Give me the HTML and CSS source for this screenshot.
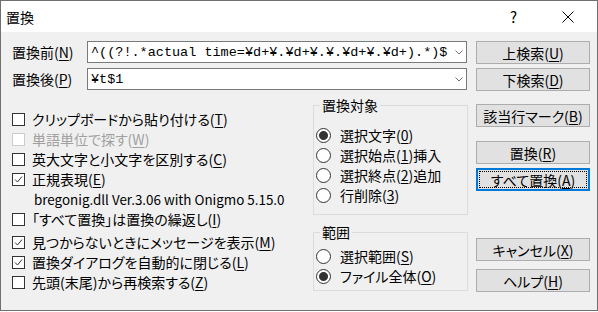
FILE: index.html
```html
<!DOCTYPE html>
<html lang="ja">
<head>
    <meta charset="UTF-8">
    <title>置換</title>
    <link rel="stylesheet" href="styles.css">
</head>
<body>

<div class="window">
    <div class="titlebar">
        <span class="title">置換</span>
        <span class="help">?</span>
        <svg class="close" width="12" height="12" viewBox="0 0 12 12"><path d="M0.5 0.5 L11.5 11.5 M11.5 0.5 L0.5 11.5" stroke="#000" stroke-width="1"/></svg>
    </div>

    <div class="content">
        <div class="main">
            <div class="field-row">
                <span class="field-label">置換前(<u>N</u>)</span>
                <div class="combo">
                    <span class="combo-text">^((?!.*actual time=¥d+¥.¥d+¥.¥.¥d+¥.¥d+).*)$</span>
                    <svg class="chev" width="8" height="5" viewBox="0 0 8 5"><path d="M0.5 0.5 L4 4 L7.5 0.5" fill="none" stroke="#707070"/></svg>
                </div>
            </div>
            <div class="field-row">
                <span class="field-label">置換後(<u>P</u>)</span>
                <div class="combo">
                    <span class="combo-text">¥t$1</span>
                    <svg class="chev" width="8" height="5" viewBox="0 0 8 5"><path d="M0.5 0.5 L4 4 L7.5 0.5" fill="none" stroke="#707070"/></svg>
                </div>
            </div>

            <div class="lower">
                <div class="options">
                    <div class="check"><span class="box"></span>クリップボードから貼り付ける(<u>T</u>)</div>
                    <div class="check disabled"><span class="box"></span>単語単位で探す(<u>W</u>)</div>
                    <div class="check"><span class="box"></span>英大文字と小文字を区別する(<u>C</u>)</div>
                    <div class="check checked"><span class="box"><svg width="11" height="11" viewBox="0 0 11 11"><path d="M2 5.5 L4.5 8 L9 2.5" fill="none" stroke="#333" stroke-width="1"/></svg></span>正規表現(<u>E</u>)</div>
                    <div class="version">bregonig.dll Ver.3.06 with Onigmo 5.15.0</div>
                    <div class="check"><span class="box"></span>「すべて置換」は置換の繰返し(<u>I</u>)</div>
                    <div class="check checked spaced"><span class="box"><svg width="11" height="11" viewBox="0 0 11 11"><path d="M2 5.5 L4.5 8 L9 2.5" fill="none" stroke="#333" stroke-width="1"/></svg></span>見つからないときにメッセージを表示(<u>M</u>)</div>
                    <div class="check checked"><span class="box"><svg width="11" height="11" viewBox="0 0 11 11"><path d="M2 5.5 L4.5 8 L9 2.5" fill="none" stroke="#333" stroke-width="1"/></svg></span>置換ダイアログを自動的に閉じる(<u>L</u>)</div>
                    <div class="check"><span class="box"></span>先頭(末尾)から再検索する(<u>Z</u>)</div>
                </div>

                <div class="groups">
                    <fieldset class="group group-target">
                        <legend>置換対象</legend>
                        <div class="radio selected"><span class="dot"></span>選択文字(<u>0</u>)</div>
                        <div class="radio"><span class="dot"></span>選択始点(<u>1</u>)挿入</div>
                        <div class="radio"><span class="dot"></span>選択終点(<u>2</u>)追加</div>
                        <div class="radio"><span class="dot"></span>行削除(<u>3</u>)</div>
                    </fieldset>
                    <fieldset class="group group-range">
                        <legend>範囲</legend>
                        <div class="radio"><span class="dot"></span>選択範囲(<u>S</u>)</div>
                        <div class="radio selected"><span class="dot"></span>ファイル全体(<u>O</u>)</div>
                    </fieldset>
                </div>
            </div>
        </div>

        <div class="side">
            <button class="btn">上検索(<u>U</u>)</button>
            <button class="btn btn-down">下検索(<u>D</u>)</button>
            <button class="btn btn-mark">該当行マーク(<u>B</u>)</button>
            <button class="btn btn-replace">置換(<u>R</u>)</button>
            <button class="btn btn-all">すべて置換(<u>A</u>)</button>
            <button class="btn btn-cancel">キャンセル(<u>X</u>)</button>
            <button class="btn btn-help">ヘルプ(<u>H</u>)</button>
        </div>
    </div>
</div>

</body>
</html>
```

FILE: styles.css
```css
body {
    margin: 0;
    background-color: #fff;
    font-family: "Noto Sans CJK JP", sans-serif;
    font-size: 14px;
    font-feature-settings: "palt";
    color: #000;
}
u {
    text-underline-offset: 2px;
}
.window {
    width: 596px;
    height: 309px;
    border: 1px solid #6f6f6f;
    background-color: #f0f0f0;
    display: flex;
    flex-direction: column;
}
.titlebar {
    height: 31px;
    background-color: #fff;
    display: flex;
    align-items: center;
}
.title {
    flex: 1;
    margin-left: 5px;
    font-size: 14px;
}
.help {
    margin-right: 45px;
    font-size: 15px;
}
.close {
    margin-right: 23px;
}
.content {
    flex: 1;
    display: flex;
    gap: 8px;
    padding: 9px 0 0 11px;
}
.main {
    width: 456px;
}
.field-row {
    display: flex;
    align-items: center;
    height: 22px;
    margin-bottom: 5px;
}
.field-row + .field-row {
    margin-bottom: 0;
}
.field-label {
    width: 75px;
}
.combo {
    width: 380px;
    height: 22px;
    box-sizing: border-box;
    border: 1px solid #7a7a7a;
    background-color: #fff;
    display: flex;
    align-items: center;
    padding: 0 3px 0 3px;
}
.combo-text {
    flex: 1;
    font-family: "Liberation Mono", monospace;
    font-size: 13.5px;
    white-space: pre;
}
.lower {
    display: flex;
}
.options {
    width: 301px;
    padding-top: 19px;
}
.check {
    display: flex;
    align-items: center;
    height: 20px;
    line-height: 20px;
}
.box {
    width: 13px;
    height: 13px;
    box-sizing: border-box;
    border: 1px solid #333;
    background-color: #fff;
    margin-right: 7px;
    display: flex;
    align-items: center;
    justify-content: center;
}
.disabled {
    color: #a0a0a0;
}
.disabled .box {
    border-color: #cccccc;
}
.version {
    height: 20px;
    line-height: 20px;
    padding-left: 22px;
    font-size: 13.4px;
}
.spaced {
    margin-top: 3px;
}
.groups {
    width: 155px;
}
.group {
    margin: 5px 0 0 0;
    border: 1px solid #dcdcdc;
    padding: 10px 0 9px 2px;
}
.group-range {
    margin-top: 7px;
    padding-top: 4px;
    padding-bottom: 4px;
}
.group legend {
    line-height: 20px;
    padding: 0 2px;
    margin-left: 4px;
}
.radio {
    display: flex;
    align-items: center;
    height: 20px;
    line-height: 20px;
}
.dot {
    width: 15px;
    height: 15px;
    box-sizing: border-box;
    border: 1px solid #333;
    border-radius: 50%;
    background-color: #fff;
    margin-right: 9px;
}
.selected .dot {
    background: radial-gradient(circle, #333 4px, #fff 5px);
}
.side {
    width: 114px;
    display: flex;
    flex-direction: column;
}
.btn {
    width: 114px;
    height: 23px;
    box-sizing: border-box;
    border: 1px solid #adadad;
    background-color: #e1e1e1;
    font-family: inherit;
    font-size: 14px;
    font-feature-settings: "palt";
    color: #000;
    padding: 0;
    line-height: 20px;
    text-align: center;
}
.btn-down {
    margin-top: 4px;
}
.btn-mark {
    margin-top: 13px;
}
.btn-replace {
    margin-top: 14px;
}
.btn-all {
    margin-top: 4px;
    border: 2px solid #0078d7;
    outline: 1px dotted #000;
    outline-offset: -4px;
}
.btn-cancel {
    margin-top: 47px;
}
.btn-help {
    margin-top: 8px;
}
```
